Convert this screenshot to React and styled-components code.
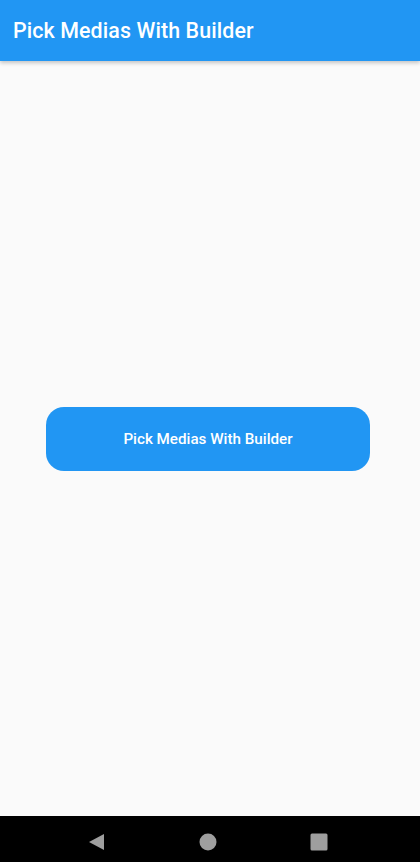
import React from 'react'
import styled, { createGlobalStyle } from 'styled-components'

const GlobalStyle = createGlobalStyle`
  html, body, #root {
    margin: 0;
    height: 100%;
  }
  body {
    font-family: Roboto, "Noto Sans", sans-serif;
    background: #fafafa;
  }
`

const Screen = styled.div`
  height: 862px;
  display: flex;
  flex-direction: column;
  background: #fafafa;
`

const AppBar = styled.header`
  height: 61px;
  flex: none;
  display: flex;
  align-items: center;
  padding: 0 13px;
  background: #2196f3;
  box-shadow: 0 2px 4px rgba(0, 0, 0, 0.22);
  position: relative;
  z-index: 1;
`

const Title = styled.h1`
  margin: 0;
  color: #fff;
  font-size: 21.4px;
  font-weight: 500;
  letter-spacing: 0.1px;
`

const Body = styled.main`
  flex: 1;
  display: flex;
  align-items: center;
  justify-content: center;
`

const PickButton = styled.button`
  width: 324px;
  height: 64px;
  margin-left: -4px;
  border: none;
  border-radius: 18px;
  background: #2196f3;
  color: #fff;
  font-family: Roboto, sans-serif;
  font-size: 15.2px;
  font-weight: 500;
  cursor: pointer;
`

const NavBar = styled.nav`
  height: 46px;
  flex: none;
  background: #000;
  display: flex;
  align-items: center;
  justify-content: center;
  gap: 93px;
  padding-top: 5px;
  padding-right: 4px;
  box-sizing: border-box;
`

const NavIcon = styled.svg`
  width: 18px;
  height: 18px;
  fill: #9e9e9e;
`

export default function App() {
  return (
    <>
      <GlobalStyle />
      <Screen>
        <AppBar>
          <Title>Pick Medias With Builder</Title>
        </AppBar>
        <Body>
          <PickButton>Pick Medias With Builder</PickButton>
        </Body>
        <NavBar>
          <NavIcon viewBox="0 0 18 18">
            <path d="M16 1 L1 9 L16 17 Z" />
          </NavIcon>
          <NavIcon viewBox="0 0 18 18">
            <circle cx="9" cy="9" r="8.5" />
          </NavIcon>
          <NavIcon viewBox="0 0 18 18">
            <rect x="0.5" y="0.5" width="17" height="17" rx="1.5" />
          </NavIcon>
        </NavBar>
      </Screen>
    </>
  )
}
